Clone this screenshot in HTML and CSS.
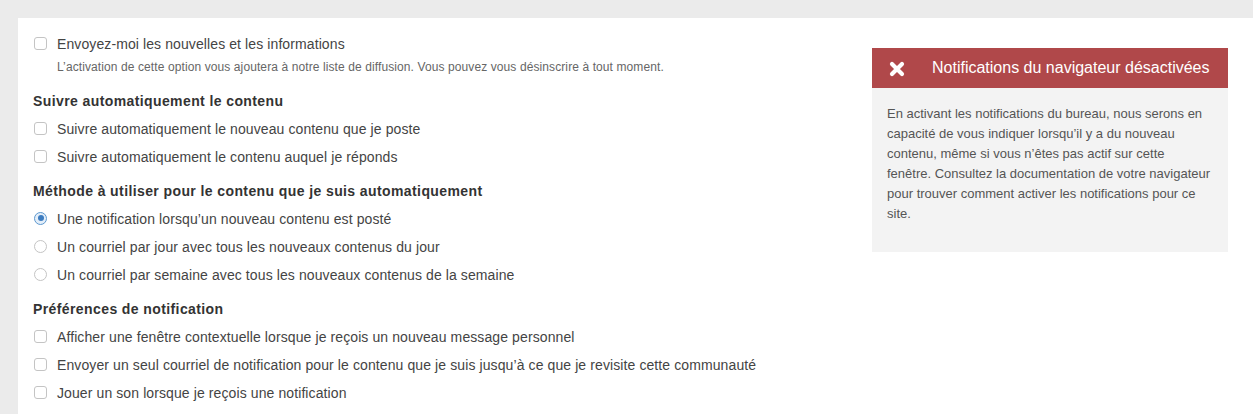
FILE: index.html
```html
<!DOCTYPE html>
<html lang="fr">
<head>
<meta charset="utf-8">
<link rel="stylesheet" href="styles.css">
</head>
<body>
<div class="page">
  <div class="main">
    <div class="prefs">
      <label class="opt"><span class="box"></span>Envoyez-moi les nouvelles et les informations</label>
      <p class="desc">L’activation de cette option vous ajoutera à notre liste de diffusion. Vous pouvez vous désinscrire à tout moment.</p>

      <h3 class="head first">Suivre automatiquement le contenu</h3>
      <label class="opt"><span class="box"></span>Suivre automatiquement le nouveau contenu que je poste</label>
      <label class="opt"><span class="box"></span>Suivre automatiquement le contenu auquel je réponds</label>

      <h3 class="head">Méthode à utiliser pour le contenu que je suis automatiquement</h3>
      <label class="opt"><span class="radio on"></span>Une notification lorsqu’un nouveau contenu est posté</label>
      <label class="opt"><span class="radio"></span>Un courriel par jour avec tous les nouveaux contenus du jour</label>
      <label class="opt"><span class="radio"></span>Un courriel par semaine avec tous les nouveaux contenus de la semaine</label>

      <h3 class="head">Préférences de notification</h3>
      <label class="opt"><span class="box"></span>Afficher une fenêtre contextuelle lorsque je reçois un nouveau message personnel</label>
      <label class="opt"><span class="box"></span>Envoyer un seul courriel de notification pour le contenu que je suis jusqu’à ce que je revisite cette communauté</label>
      <label class="opt"><span class="box"></span>Jouer un son lorsque je reçois une notification</label>
    </div>
    <aside class="notice">
      <div class="notice-head">
        <svg class="x-icon" width="16" height="16" viewBox="0 0 16 16"><path d="M3 3 L13 13 M13 3 L3 13" stroke="#fff" stroke-width="4.2" stroke-linecap="round"/></svg>
        <span>Notifications du navigateur désactivées</span>
      </div>
      <div class="notice-body">En activant les notifications du bureau, nous serons en capacité de vous indiquer lorsqu’il y a du nouveau contenu, même si vous n’êtes pas actif sur cette<br>fenêtre. Consultez la documentation de votre navigateur pour trouver comment activer les notifications pour ce site.</div>
    </aside>
  </div>
</div>
</body>
</html>
```

FILE: styles.css
```css
html, body {
  margin: 0;
  padding: 0;
  background: #ebebeb;
  font-family: "Liberation Sans", Arial, sans-serif;
}
.page {
  padding: 18px 0 0 18px;
  height: 396px;
  overflow: hidden;
}
.main {
  background: #fff;
  display: flex;
  align-items: flex-start;
  padding: 12px 25px 0 15px;
  min-height: 400px;
  box-sizing: border-box;
}
.prefs {
  flex: 1;
  display: flex;
  flex-direction: column;
}
.opt {
  display: flex;
  align-items: center;
  height: 28px;
  font-size: 14px;
  letter-spacing: 0.1px;
  color: #444;
  white-space: nowrap;
}
.box, .radio {
  width: 13px;
  height: 13px;
  box-sizing: border-box;
  border: 1px solid #c4c4c4;
  background: #fff;
  margin: -2px 10px 0 1px;
  flex: none;
}
.box {
  border-radius: 3px;
}
.radio {
  border-radius: 50%;
  position: relative;
}
.radio.on {
  border-color: #5d98cf;
  background: #e3eef9;
}
.radio.on::after {
  content: "";
  position: absolute;
  left: 2.5px;
  top: 2.5px;
  width: 6px;
  height: 6px;
  border-radius: 50%;
  background: #3c7cc0;
}
.desc {
  margin: 1px 0 6px 24px;
  font-size: 12px;
  letter-spacing: 0.1px;
  line-height: 16px;
  color: #666;
  white-space: nowrap;
}
.head {
  margin: 10px 0 4px 0;
  font-size: 14px;
  letter-spacing: 0.4px;
  line-height: 20px;
  font-weight: bold;
  color: #333;
}
.notice {
  width: 356px;
  flex: none;
  margin-top: 18px;
}
.notice-head {
  background: #b0484a;
  color: #fff;
  height: 40px;
  display: flex;
  align-items: center;
  padding-left: 17px;
  font-size: 16px;
}
.x-icon {
  flex: none;
  margin-right: 27px;
  margin-top: 1px;
}
.notice-body {
  background: #f3f3f3;
  padding: 16px 12px 28px 15px;
  font-size: 13px;
  line-height: 20px;
  color: #555;
}
```
